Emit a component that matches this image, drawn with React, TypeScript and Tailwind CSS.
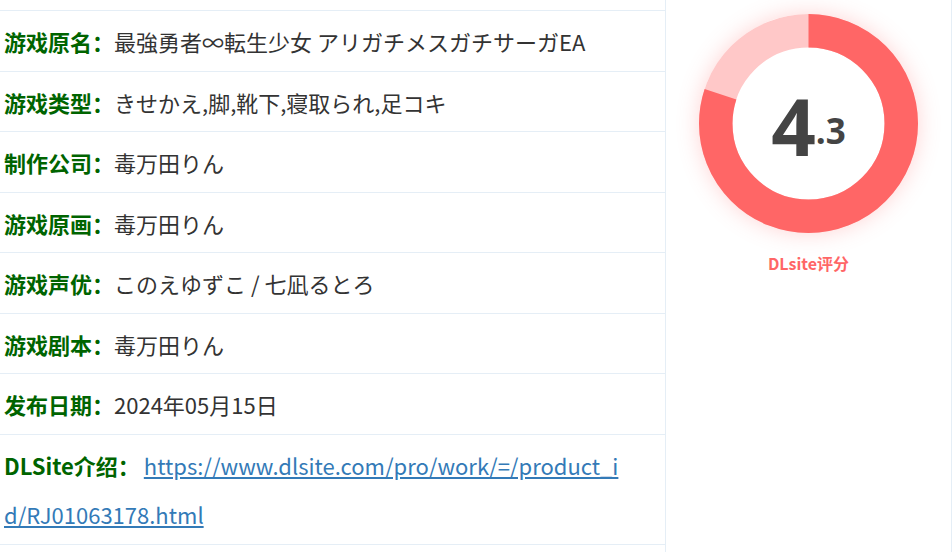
const rows: { label: string; value: string }[] = [
  { label: "游戏原名：", value: "最強勇者∞転生少女 アリガチメスガチサーガEA" },
  { label: "游戏类型：", value: "きせかえ,脚,靴下,寝取られ,足コキ" },
  { label: "制作公司：", value: "毒万田りん" },
  { label: "游戏原画：", value: "毒万田りん" },
  { label: "游戏声优：", value: "このえゆずこ / 七凪るとろ" },
  { label: "游戏剧本：", value: "毒万田りん" },
  { label: "发布日期：", value: "2024年05月15日" },
];

const link = "https://www.dlsite.com/pro/work/=/product_id/RJ01063178.html";

function ScoreRing({ score }: { score: number }) {
  const r = 92.75;
  const c = 2 * Math.PI * r;
  // ring fill is score out of 5, rounded down to the whole point
  const filled = (Math.floor(score) / 5) * c;
  const [whole, frac] = score.toFixed(1).split(".");

  return (
    <div className="relative w-[219px] h-[219px] rounded-full shadow-[0_0_22px_rgba(255,102,102,0.28)]">
      <svg width="219" height="219" viewBox="0 0 219 219" className="absolute inset-0">
        <circle cx="109.5" cy="109.5" r={r} fill="none" stroke="#ffc8c8" strokeWidth="33.5" />
        <circle
          cx="109.5"
          cy="109.5"
          r={r}
          fill="none"
          stroke="#ff6666"
          strokeWidth="33.5"
          strokeDasharray={`${filled} ${c}`}
          transform="rotate(-90 109.5 109.5)"
        />
      </svg>
      <div className="absolute inset-0 flex items-center justify-center pt-[4px] font-['Open_Sans',sans-serif] font-bold text-[#444444]">
        <span className="text-[78px] leading-none">{whole}</span>
        <span className="text-[35px] leading-none self-center mt-[10px]">.{frac}</span>
      </div>
    </div>
  );
}

export default function App() {
  return (
    <div className="flex w-[952px] h-[552px] overflow-hidden bg-white font-['Noto_Sans_CJK_SC','Noto_Sans_CJK_JP',sans-serif]">
      {/* Info table */}
      <div className="w-[666px] shrink-0 border-r border-[#e5eef6]">
        <div className="h-[11px] border-b border-[#e5eef6]" />
        {rows.map((row) => (
          <div
            key={row.label}
            className="pl-[4px] pr-[20px] pt-[6px] pb-[4px] border-b border-[#e5eef6] text-[22px] leading-[49.5px] text-[#333333]"
          >
            <span className="font-bold text-[#006400]">{row.label}</span>
            {row.value}
          </div>
        ))}
        <div className="pl-[4px] pr-[32px] pt-[6px] pb-[4px] border-b border-[#e5eef6] text-[22px] leading-[49.5px] break-all">
          <span className="font-bold text-[#006400]">DLSite介绍：</span>
          <a href={link} className="ml-[4px] text-[#337ab7] underline">
            {link}
          </a>
        </div>
      </div>

      {/* Score */}
      <div className="w-[286px] shrink-0 border-r border-[#e5eef6] flex flex-col items-center pt-[14px]">
        <ScoreRing score={4.3} />
        <div className="mt-[18px] text-[16px] font-bold text-[#ff6666]">DLsite评分</div>
      </div>
    </div>
  );
}
